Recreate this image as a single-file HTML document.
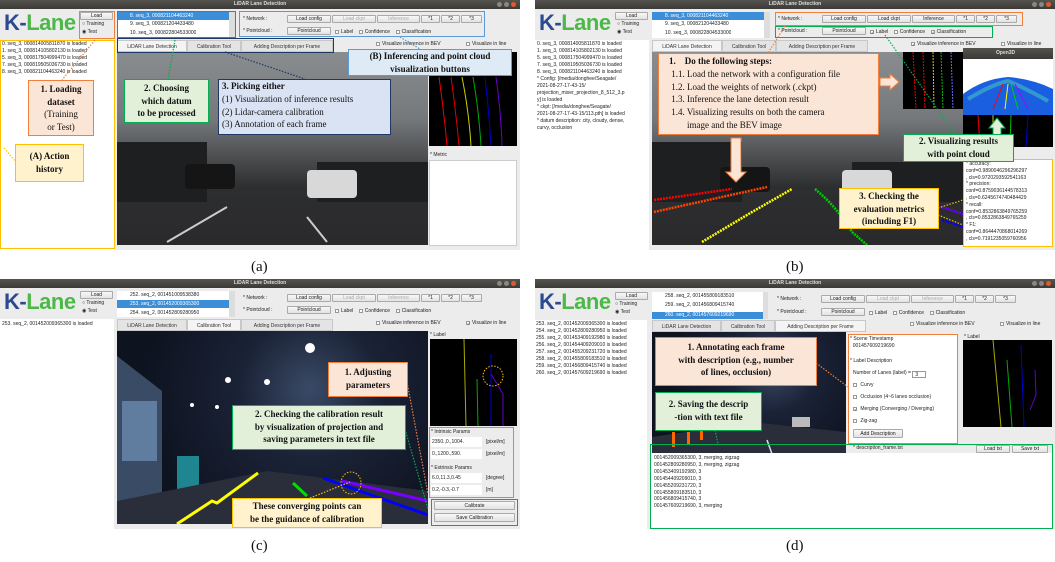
<!DOCTYPE html>
<html><head><meta charset="utf-8">
<style>
*{margin:0;padding:0;box-sizing:border-box}
body{width:1055px;height:562px;background:#fff;position:relative;overflow:hidden;font-family:"Liberation Sans",sans-serif}
.p{position:absolute;width:520px;height:250px;background:#ececec;overflow:hidden}
.a{position:absolute}
.tb{left:0;top:0;width:520px;height:9px;background:linear-gradient(#55534e,#3b3a36);color:#ddd;font-size:5px;font-weight:bold;text-align:center;line-height:9px}
.dot{width:5px;height:5px;border-radius:50%;background:#8a8883;top:2px}
.logo{left:4px;top:9px;font-size:22px;font-weight:bold;letter-spacing:-0.5px;line-height:28px}
.logo b{color:#2b4a8f}.logo i{font-style:normal;color:#4cb848}
.btn{background:linear-gradient(#f8f8f8,#e2e2e2);border:0.5px solid #aaa;border-radius:1px;font-size:5px;text-align:center;line-height:7px;height:8px;color:#222}
.dis{color:#aaa}
.t5{font-size:5px;color:#222;line-height:7px;white-space:nowrap}
.wb{background:#fff}
.cb{display:inline-block;width:4px;height:4px;border:0.5px solid #999;background:#fff;margin-right:2px;vertical-align:-0.5px;font-size:4px;line-height:4px}
.tab{top:40px;height:12px;font-size:5px;line-height:12px;text-align:center;background:#e4e4e4;border:0.5px solid #c8c8c8;color:#333}
.tab.on{background:#f4f4f4}
.ann{font-family:"Liberation Serif",serif;font-weight:bold;font-size:9px;text-align:center;line-height:12.5px;color:#111;border:1.5px solid}
.o{border-color:#f07f3c;background:#fbe5d6}
.y{border-color:#ffc000;background:#fff2cc}
.g{border-color:#00b050;background:#e2f0d9}
.nv{border-color:#1f3864;background:#dae3f3}
.bl{border-color:#5b9bd5;background:#deebf7}
.fr{border:1.5px solid;background:transparent}
.cap{font-family:"Liberation Serif",serif;font-size:15px;color:#111}
.sky{background:linear-gradient(#8a8d90 0%,#75787b 35%,#4b4d4f 55%,#2d2e30 70%,#2a2a2c 100%)}
.night{background:radial-gradient(circle at 62% 30%,#3a4a66 0%,#1a2236 30%,#0e1320 70%)}
</style></head><body>

<!-- ============ PANEL A ============ -->
<div class="p" style="left:0;top:0">
 <div class="a tb">LiDAR Lane Detection</div>
 <div class="a dot" style="left:497px"></div><div class="a dot" style="left:504px"></div><div class="a dot" style="left:511px;background:#e05a2b"></div>
 <div class="a logo"><b>K-</b><i>Lane</i></div>
 <div class="a btn" style="left:80px;top:12px;width:33px">Load</div>
 <div class="a t5" style="left:82px;top:21px">○ Training</div>
 <div class="a t5" style="left:82px;top:29px">◉ Test</div>
 <div class="a wb" style="left:0;top:40px;width:114px;height:210px"></div>
 <div class="a t5" style="left:2px;top:41px">0. seq_3, 000814005811870 is loaded<br>1. seq_3, 000814105802130 is loaded<br>5. seq_3, 000817504999470 is loaded<br>7. seq_3, 000819505036730 is loaded<br>8. seq_3, 000821104463240 is loaded</div>
 <div class="a wb" style="left:117px;top:12px;width:118px;height:26px"></div>
 <div class="a t5" style="left:117px;top:12px;width:112px;background:#3d8ed8;color:#fff;padding-left:13px;height:8px;line-height:8px">8. seq_3, 000821104463240</div>
 <div class="a t5" style="left:130px;top:21px">9. seq_3, 000821204433480</div>
 <div class="a t5" style="left:130px;top:30px;height:6px;overflow:hidden">10. seq_3, 000822804533000</div>
 <div class="a" style="left:229px;top:12px;width:6px;height:26px;background:#ddd"></div>
 <div class="a t5" style="left:243px;top:16px">* Network :</div>
 <div class="a btn" style="left:287px;top:15px;width:44px">Load config</div>
 <div class="a btn dis" style="left:332px;top:15px;width:44px">Load ckpt</div>
 <div class="a btn dis" style="left:377px;top:15px;width:43px">Inference</div>
 <div class="a btn" style="left:421px;top:15px;width:19px">*1</div>
 <div class="a btn" style="left:441px;top:15px;width:19px">*2</div>
 <div class="a btn" style="left:461px;top:15px;width:21px">*3</div>
 <div class="a t5" style="left:243px;top:28px">* Pointcloud :</div>
 <div class="a btn" style="left:287px;top:27px;width:44px">Pointcloud</div>
 <div class="a t5" style="left:335px;top:29px"><span class="cb"></span>Label &nbsp;&nbsp;&nbsp;<span class="cb"></span>Confidence &nbsp;&nbsp;&nbsp;<span class="cb"></span>Classification</div>
 <div class="a tab on" style="left:117px;width:70px">LiDAR Lane Detection</div>
 <div class="a tab" style="left:187px;width:54px">Calibration Tool</div>
 <div class="a tab" style="left:241px;width:92px">Adding Description per Frame</div>
 <div class="a t5" style="left:376px;top:41px"><span class="cb"></span>Visualize inference in BEV</div>
 <div class="a t5" style="left:466px;top:41px"><span class="cb"></span>Visualize in line</div>
 <div class="a sky" style="left:117px;top:52px;width:311px;height:193px"></div>
 <svg class="a" style="left:117px;top:52px" width="311" height="193"><g fill="#1d1f20"><rect x="0" y="90" width="90" height="60"/><rect x="200" y="110" width="111" height="40"/></g><rect x="68" y="112" width="50" height="25" fill="#151515" rx="4"/><rect x="190" y="118" width="50" height="28" fill="#d8d8d8" rx="4"/><g stroke="#ccc" stroke-width="2"><line x1="50" y1="190" x2="110" y2="155"/><line x1="210" y1="190" x2="190" y2="165"/></g></svg>
 <div class="a" style="left:429px;top:52px;width:88px;height:94px;background:#000"></div>
 <svg class="a" style="left:429px;top:52px" width="88" height="94"><g stroke-width="1" fill="none"><path d="M10 25 Q15 60 18 94" stroke="#e00"/><path d="M22 25 Q27 60 30 94" stroke="#d00"/><path d="M33 25 Q40 60 42 94" stroke="#cc0"/><path d="M44 25 Q50 60 52 94" stroke="#0a0"/><path d="M56 25 Q60 60 62 94" stroke="#00c"/><path d="M67 25 Q72 60 73 94" stroke="#60c"/></g></svg>
 <div class="a t5" style="left:430px;top:152px">* Metric</div>
 <div class="a wb" style="left:429px;top:160px;width:88px;height:86px;border:0.5px solid #ccc"></div>
 <!-- annotations -->
 <div class="a fr" style="left:79px;top:11px;width:36px;height:28px;border-color:#f07f3c"></div>
 <div class="a fr" style="left:0;top:40px;width:115px;height:209px;border-color:#ffc000"></div>
 <div class="a fr" style="left:117px;top:11px;width:119px;height:27px;border-color:#00b050"></div>
 <div class="a fr" style="left:117px;top:38px;width:217px;height:15px;border-color:#1f3864"></div>
 <div class="a fr" style="left:239px;top:11px;width:246px;height:26px;border-color:#5b9bd5"></div>
 <svg class="a" style="left:0;top:0" width="520" height="250"><g stroke-dasharray="1.5,1.5" stroke-width="1.2" fill="none"><line x1="95" y1="40" x2="62" y2="80" stroke="#f07f3c"/><line x1="4" y1="148" x2="16" y2="162" stroke="#ffc000"/><line x1="175" y1="40" x2="168" y2="79" stroke="#00b050"/><line x1="225" y1="52" x2="305" y2="79" stroke="#1f3864"/><line x1="400" y1="37" x2="420" y2="49" stroke="#5b9bd5"/></g></svg>
 <div class="a ann o" style="left:28px;top:80px;width:66px;height:56px;padding-top:2px">1. Loading<br>dataset<br><span style="font-weight:normal">(Training<br>or Test)</span></div>
 <div class="a ann y" style="left:15px;top:144px;width:69px;height:38px;padding-top:5px">(A) Action<br>history</div>
 <div class="a ann g" style="left:124px;top:79px;width:85px;height:44px;padding-top:2px">2. Choosing<br>which datum<br>to be processed</div>
 <div class="a ann nv" style="left:218px;top:79px;width:173px;height:56px;text-align:left;padding-left:3px;font-weight:normal;line-height:12.8px"><b>3. Picking either</b><br>(1) Visualization of inference results<br>(2) Lidar-camera calibration<br>(3) Annotation of each frame</div>
 <div class="a ann bl" style="left:348px;top:49px;width:164px;height:27px;padding-top:0px">(B) Inferencing and point cloud<br>visualization buttons</div>
</div>

<!-- ============ PANEL B ============ -->
<div class="p" style="left:535px;top:0">
 <div class="a tb">LiDAR Lane Detection</div>
 <div class="a dot" style="left:497px"></div><div class="a dot" style="left:504px"></div><div class="a dot" style="left:511px;background:#e05a2b"></div>
 <div class="a logo"><b>K-</b><i>Lane</i></div>
 <div class="a btn" style="left:80px;top:12px;width:33px">Load</div>
 <div class="a t5" style="left:82px;top:21px">○ Training</div>
 <div class="a t5" style="left:82px;top:29px">◉ Test</div>
 <div class="a wb" style="left:0;top:40px;width:114px;height:210px"></div>
 <div class="a t5" style="left:2px;top:41px">0. seq_3, 000814005811870 is loaded<br>1. seq_3, 000814105802130 is loaded<br>5. seq_3, 000817504999470 is loaded<br>7. seq_3, 000819505036730 is loaded<br>8. seq_3, 000821104463240 is loaded<br>* Config: [/media/donghee/Seagate/<br>2021-08-27-17-43-15/<br>projection_mixer_projection_8_512_3.p<br>y] is loaded<br>* ckpt: [/media/donghee/Seagate/<br>2021-08-27-17-43-15/113.pth] is loaded<br>* datum description: city, cloudy, dense,<br>curvy, occlusion</div>
 <div class="a wb" style="left:117px;top:12px;width:118px;height:26px"></div>
 <div class="a t5" style="left:117px;top:12px;width:112px;background:#3d8ed8;color:#fff;padding-left:13px;height:8px;line-height:8px">8. seq_3, 000821104463240</div>
 <div class="a t5" style="left:130px;top:21px">9. seq_3, 000821204433480</div>
 <div class="a t5" style="left:130px;top:30px;height:6px;overflow:hidden">10. seq_3, 000822804533000</div>
 <div class="a" style="left:229px;top:12px;width:6px;height:26px;background:#ddd"></div>
 <div class="a t5" style="left:243px;top:16px">* Network :</div>
 <div class="a btn" style="left:287px;top:15px;width:44px">Load config</div>
 <div class="a btn" style="left:332px;top:15px;width:44px">Load ckpt</div>
 <div class="a btn" style="left:377px;top:15px;width:43px">Inference</div>
 <div class="a btn" style="left:421px;top:15px;width:19px">*1</div>
 <div class="a btn" style="left:441px;top:15px;width:19px">*2</div>
 <div class="a btn" style="left:461px;top:15px;width:21px">*3</div>
 <div class="a t5" style="left:243px;top:28px">* Pointcloud :</div>
 <div class="a btn" style="left:287px;top:27px;width:44px">Pointcloud</div>
 <div class="a t5" style="left:335px;top:29px"><span class="cb">✓</span>Label &nbsp;&nbsp;&nbsp;<span class="cb"></span>Confidence &nbsp;&nbsp;&nbsp;<span class="cb">✓</span>Classification</div>
 <div class="a tab on" style="left:117px;width:70px">LiDAR Lane Detection</div>
 <div class="a tab" style="left:187px;width:54px">Calibration Tool</div>
 <div class="a tab" style="left:241px;width:92px">Adding Description per Frame</div>
 <div class="a t5" style="left:376px;top:41px"><span class="cb">✓</span>Visualize inference in BEV</div>
 <div class="a t5" style="left:466px;top:41px"><span class="cb"></span>Visualize in line</div>
 <div class="a sky" style="left:117px;top:52px;width:311px;height:193px"></div>
 <svg class="a" style="left:117px;top:52px" width="311" height="193"><g fill="#1d1f20"><rect x="0" y="90" width="90" height="60"/><rect x="200" y="110" width="111" height="40"/></g><rect x="68" y="115" width="50" height="25" fill="#151515" rx="4"/><rect x="190" y="118" width="50" height="28" fill="#d8d8d8" rx="4"/>
 <g stroke-dasharray="2,1" stroke-width="2.5" fill="none"><path d="M2 148 L80 137" stroke="#f00"/><path d="M2 160 L115 135" stroke="#f40"/><path d="M50 190 L100 160 L140 137" stroke="#ff0"/><path d="M163 137 Q185 155 200 180 L215 193" stroke="#0c0"/><path d="M290 155 L311 162" stroke="#60f"/><path d="M290 168 L311 175" stroke="#00f"/></g></svg>
 <div class="a" style="left:368px;top:52px;width:60px;height:57px;background:#000"></div>
 <svg class="a" style="left:368px;top:52px" width="60" height="57"><g stroke-width="1" stroke-dasharray="2,1"><line x1="10" y1="0" x2="13" y2="57" stroke="#e00"/><line x1="20" y1="0" x2="22" y2="57" stroke="#e00"/><line x1="30" y1="0" x2="31" y2="57" stroke="#cc0"/><line x1="38" y1="0" x2="40" y2="57" stroke="#0b0"/><line x1="48" y1="0" x2="50" y2="57" stroke="#66f"/></g></svg>
 <div class="a" style="left:428px;top:48px;width:90px;height:99px;background:#000"></div>
 <div class="a" style="left:428px;top:48px;width:90px;height:11px;background:linear-gradient(#55534e,#3b3a36);color:#ddd;font-size:5px;font-weight:bold;line-height:11px;padding-left:33px">Open3D</div>
 <div class="a" style="left:428px;top:59px;width:90px;height:56px;background:#fff"></div>
 <svg class="a" style="left:428px;top:59px" width="90" height="56"><path d="M0 35 Q20 20 45 18 Q70 20 90 30 L90 56 L0 56Z" fill="#1a5fe0"/><path d="M5 40 Q30 25 45 22 Q60 28 85 42" stroke="#39c" stroke-width="4" fill="none"/><g stroke-width="1"><line x1="40" y1="25" x2="30" y2="50" stroke="#f00"/><line x1="45" y1="25" x2="42" y2="50" stroke="#ff0"/><line x1="48" y1="25" x2="55" y2="50" stroke="#0c0"/><line x1="52" y1="25" x2="65" y2="50" stroke="#a0f"/></g></svg>
 <svg class="a" style="left:428px;top:115px" width="90" height="32"><g stroke-width="1"><line x1="15" y1="0" x2="17" y2="32" stroke="#e00"/><line x1="30" y1="0" x2="30" y2="32" stroke="#cc0"/><line x1="48" y1="0" x2="47" y2="32" stroke="#0b0"/><line x1="65" y1="0" x2="63" y2="32" stroke="#00c"/></g></svg>
 <div class="a wb" style="left:429px;top:160px;width:88px;height:86px"></div>
 <div class="a t5" style="left:431px;top:161px;line-height:6.8px">* accuracy:<br>conf=0.9890046296296297<br>, cls=0.9720293592541163<br>* precision:<br>conf=0.8759036144578313<br>, cls=0.6245674740484429<br>* recall:<br>conf=0.8532863849765259<br>, cls=0.8532863849765259<br>* F1:<br>conf=0.8644470868014269<br>, cls=0.7191235059760956</div>
 <div class="a fr" style="left:428px;top:159px;width:90px;height:88px;border-color:#ffc000"></div>
 <div class="a fr" style="left:240px;top:12px;width:248px;height:14px;border-color:#f07f3c"></div>
 <div class="a fr" style="left:240px;top:26px;width:218px;height:12px;border-color:#00b050"></div>
 <svg class="a" style="left:0;top:0" width="520" height="250"><g stroke-dasharray="1.5,1.5" stroke-width="1.2" fill="none"><line x1="250" y1="26" x2="233" y2="53" stroke="#f07f3c"/><line x1="350" y1="35" x2="420" y2="134" stroke="#00b050"/><line x1="403" y1="208" x2="428" y2="200" stroke="#ffc000"/><line x1="403" y1="215" x2="428" y2="225" stroke="#ffc000"/></g>
 <path d="M345 78 L355 78 L355 74 L364 82 L355 90 L355 86 L345 86Z" fill="#fbe5d6" stroke="#f07f3c"/>
 <path d="M196 138 L206 138 L206 172 L211 172 L201 182 L191 172 L196 172Z" fill="#fbe5d6" stroke="#f07f3c"/>
 <path d="M458 137 L466 137 L466 128 L470 128 L462 118 L454 128 L458 128Z" fill="#e2f0d9" stroke="#00b050"/></svg>
 <div class="a ann o" style="left:123px;top:53px;width:221px;height:82px;text-align:left;font-weight:normal;padding-left:10px;line-height:12.8px;padding-top:1px"><b>1.&nbsp;&nbsp;&nbsp;&nbsp;Do the following steps:</b><br>&nbsp;1.1. Load the network with a configuration file<br>&nbsp;1.2. Load the weights of network (.ckpt)<br>&nbsp;1.3. Inference the lane detection result<br>&nbsp;1.4. Visualizing results on both the camera<br>&nbsp;&nbsp;&nbsp;&nbsp;&nbsp;&nbsp;&nbsp;&nbsp;image and the BEV image</div>
 <div class="a ann g" style="left:368px;top:134px;width:111px;height:28px;padding-top:0px">2. Visualizing results<br>with point cloud</div>
 <div class="a ann y" style="left:304px;top:188px;width:100px;height:41px;padding-top:1px">3. Checking the<br>evaluation metrics<br>(including F1)</div>
</div>

<!-- ============ PANEL C ============ -->
<div class="p" style="left:0;top:279px">
 <div class="a tb">LiDAR Lane Detection</div>
 <div class="a dot" style="left:497px"></div><div class="a dot" style="left:504px"></div><div class="a dot" style="left:511px;background:#e05a2b"></div>
 <div class="a logo"><b>K-</b><i>Lane</i></div>
 <div class="a btn" style="left:80px;top:12px;width:33px">Load</div>
 <div class="a t5" style="left:82px;top:21px">○ Training</div>
 <div class="a t5" style="left:82px;top:29px">◉ Test</div>
 <div class="a wb" style="left:0;top:40px;width:114px;height:210px"></div>
 <div class="a t5" style="left:2px;top:42px">253. seq_2, 001452009365300 is loaded</div>
 <div class="a wb" style="left:117px;top:12px;width:118px;height:26px"></div>
 <div class="a t5" style="left:130px;top:13px">252. seq_2, 001451009538380</div>
 <div class="a t5" style="left:117px;top:21px;width:112px;background:#3d8ed8;color:#fff;padding-left:13px;height:8px;line-height:8px">253. seq_2, 001452009365300</div>
 <div class="a t5" style="left:130px;top:31px;height:6px;overflow:hidden">254. seq_2, 001452809280950</div>
 <div class="a" style="left:229px;top:12px;width:6px;height:26px;background:#ddd"></div>
 <div class="a t5" style="left:243px;top:16px">* Network :</div>
 <div class="a btn" style="left:287px;top:15px;width:44px">Load config</div>
 <div class="a btn dis" style="left:332px;top:15px;width:44px">Load ckpt</div>
 <div class="a btn dis" style="left:377px;top:15px;width:43px">Inference</div>
 <div class="a btn" style="left:421px;top:15px;width:19px">*1</div>
 <div class="a btn" style="left:441px;top:15px;width:19px">*2</div>
 <div class="a btn" style="left:461px;top:15px;width:21px">*3</div>
 <div class="a t5" style="left:243px;top:28px">* Pointcloud :</div>
 <div class="a btn" style="left:287px;top:27px;width:44px">Pointcloud</div>
 <div class="a t5" style="left:335px;top:29px"><span class="cb"></span>Label &nbsp;&nbsp;&nbsp;<span class="cb"></span>Confidence &nbsp;&nbsp;&nbsp;<span class="cb"></span>Classification</div>
 <div class="a tab" style="left:117px;width:70px">LiDAR Lane Detection</div>
 <div class="a tab on" style="left:187px;width:54px">Calibration Tool</div>
 <div class="a tab" style="left:241px;width:92px">Adding Description per Frame</div>
 <div class="a t5" style="left:376px;top:41px"><span class="cb"></span>Visualize inference in BEV</div>
 <div class="a t5" style="left:466px;top:41px"><span class="cb">✓</span>Visualize in line</div>
 <div class="a night" style="left:117px;top:52px;width:311px;height:193px"></div>
 <svg class="a" style="left:117px;top:52px" width="311" height="193"><path d="M0 25 L45 60 L45 180 L0 193Z" fill="#3a4b66"/><rect x="5" y="70" width="35" height="60" fill="#7a9cc4" opacity="0.6"/><rect x="60" y="125" width="22" height="40" fill="#2ad0d8" opacity="0.6"/><g fill="#fff"><circle cx="193" cy="17" r="5"/><circle cx="111" cy="49" r="3"/><circle cx="150" cy="51" r="3"/><circle cx="75" cy="74" r="2"/><circle cx="100" cy="76" r="2"/></g><path d="M0 193 L311 193 L311 160 L150 140 L0 170Z" fill="#2a2e3a"/>
 <g stroke-width="3" fill="none"><path d="M60 193 L95 170 L100 172 L141 142" stroke="#ff0"/><path d="M176 152 L190 165" stroke="#0d0"/><path d="M206 147 L311 184" stroke="#00f"/><path d="M225 150 L311 170" stroke="#70f"/></g>
 <ellipse cx="234" cy="152" rx="10" ry="11" fill="none" stroke="#ffc000" stroke-dasharray="1.5,1.5"/></svg>
 <div class="a t5" style="left:430px;top:53px">* Label</div>
 <div class="a" style="left:430px;top:60px;width:87px;height:87px;background:#000"></div>
 <svg class="a" style="left:430px;top:60px" width="87" height="87"><g stroke-width="1" fill="none"><path d="M34 0 L36 87" stroke="#aa0"/><path d="M47 40 L48 87" stroke="#0a0"/><path d="M61 15 L61 87" stroke="#00c"/><path d="M61 35 L73 55 L73 87" stroke="#60c"/></g><circle cx="63" cy="37" r="10" fill="none" stroke="#ffc000" stroke-dasharray="1.5,1.5"/></svg>
 <div class="a t5" style="left:431px;top:150px;line-height:7px">* Intrinsic Params</div>
 <div class="a wb t5" style="left:431px;top:158px;width:51px;height:10px;line-height:10px;padding-left:1px">2350.,0.,1004.</div><div class="a t5" style="left:486px;top:160px">[pixel/m]</div>
 <div class="a wb t5" style="left:431px;top:170px;width:51px;height:10px;line-height:10px;padding-left:1px">0.,1200.,590.</div><div class="a t5" style="left:486px;top:172px">[pixel/m]</div>
 <div class="a t5" style="left:431px;top:186px">* Extrinsic Params</div>
 <div class="a wb t5" style="left:431px;top:194px;width:51px;height:10px;line-height:10px;padding-left:1px">6.0,11.3,0.45</div><div class="a t5" style="left:486px;top:196px">[degree]</div>
 <div class="a wb t5" style="left:431px;top:206px;width:51px;height:10px;line-height:10px;padding-left:1px">0.2,-0.3,-0.7</div><div class="a t5" style="left:486px;top:208px">[m]</div>
 <div class="a fr" style="left:429px;top:148px;width:85px;height:71px;border-color:#f07f3c"></div>
 <div class="a btn" style="left:434px;top:222px;width:81px;height:9px;line-height:9px">Calibrate</div>
 <div class="a btn" style="left:434px;top:234px;width:81px;height:9px;line-height:9px">Save Calibration</div>
 <div class="a fr" style="left:431px;top:220px;width:87px;height:27px;border-color:#00b050"></div>
 <svg class="a" style="left:0;top:0" width="520" height="250"><g stroke-dasharray="1.5,1.5" stroke-width="1.2" fill="none"><line x1="407" y1="103" x2="428" y2="215" stroke="#f07f3c"/><line x1="405" y1="150" x2="428" y2="230" stroke="#00b050"/><line x1="310" y1="219" x2="350" y2="203" stroke="#ffc000"/></g></svg>
 <div class="a ann o" style="left:328px;top:83px;width:80px;height:35px;padding-top:3px">1. Adjusting<br>parameters</div>
 <div class="a ann g" style="left:232px;top:126px;width:174px;height:45px;padding-top:2px">2. Checking the calibration result<br>by visualization of projection and<br>saving parameters in text file</div>
 <div class="a ann y" style="left:232px;top:219px;width:150px;height:30px;padding-top:1px">These converging points can<br>be the guidance of calibration</div>
</div>

<!-- ============ PANEL D ============ -->
<div class="p" style="left:535px;top:279px">
 <div class="a tb">LiDAR Lane Detection</div>
 <div class="a dot" style="left:497px"></div><div class="a dot" style="left:504px"></div><div class="a dot" style="left:511px;background:#e05a2b"></div>
 <div class="a logo"><b>K-</b><i>Lane</i></div>
 <div class="a btn" style="left:80px;top:13px;width:33px">Load</div>
 <div class="a t5" style="left:80px;top:22px">○ Training</div>
 <div class="a t5" style="left:80px;top:30px">◉ Test</div>
 <div class="a wb" style="left:0;top:41px;width:112px;height:209px"></div>
 <div class="a t5" style="left:1px;top:42px">253. seq_2, 001452009365300 is loaded<br>254. seq_2, 001452809280950 is loaded<br>255. seq_2, 001453409192980 is loaded<br>256. seq_2, 001454409209010 is loaded<br>257. seq_2, 001455209231720 is loaded<br>258. seq_2, 001455809183510 is loaded<br>259. seq_2, 001456809415740 is loaded<br>260. seq_2, 001457609219690 is loaded</div>
 <div class="a wb" style="left:117px;top:13px;width:116px;height:27px"></div>
 <div class="a t5" style="left:130px;top:14px">258. seq_2, 001455809183510</div>
 <div class="a t5" style="left:130px;top:23px">259. seq_2, 001456809415740</div>
 <div class="a t5" style="left:117px;top:33px;width:111px;background:#3d8ed8;color:#fff;padding-left:13px;height:7px;overflow:hidden">260. seq_2, 001457609219690</div>
 <div class="a" style="left:228px;top:13px;width:5px;height:27px;background:#ddd"></div>
 <div class="a t5" style="left:242px;top:17px">* Network :</div>
 <div class="a btn" style="left:286px;top:16px;width:44px">Load config</div>
 <div class="a btn dis" style="left:331px;top:16px;width:44px">Load ckpt</div>
 <div class="a btn dis" style="left:376px;top:16px;width:43px">Inference</div>
 <div class="a btn" style="left:420px;top:16px;width:19px">*1</div>
 <div class="a btn" style="left:440px;top:16px;width:19px">*2</div>
 <div class="a btn" style="left:460px;top:16px;width:21px">*3</div>
 <div class="a t5" style="left:242px;top:30px">* Pointcloud :</div>
 <div class="a btn" style="left:286px;top:29px;width:44px">Pointcloud</div>
 <div class="a t5" style="left:334px;top:31px"><span class="cb"></span>Label &nbsp;&nbsp;&nbsp;<span class="cb"></span>Confidence &nbsp;&nbsp;&nbsp;<span class="cb"></span>Classification</div>
 <div class="a tab" style="left:117px;width:69px;top:41px">LiDAR Lane Detection</div>
 <div class="a tab" style="left:186px;width:54px;top:41px">Calibration Tool</div>
 <div class="a tab on" style="left:240px;width:91px;top:41px">Adding Description per Frame</div>
 <div class="a t5" style="left:375px;top:42px"><span class="cb"></span>Visualize inference in BEV</div>
 <div class="a t5" style="left:465px;top:42px"><span class="cb"></span>Visualize in line</div>
 <div class="a night" style="left:117px;top:53px;width:194px;height:122px"></div>
 <svg class="a" style="left:117px;top:53px" width="194" height="122"><path d="M0 122 L194 122 L194 100 L100 90 L0 105Z" fill="#2a2e3a"/><rect x="140" y="85" width="18" height="10" fill="#bbb"/><g fill="#f60"><rect x="20" y="100" width="3" height="15"/><rect x="35" y="100" width="3" height="12"/><rect x="48" y="98" width="3" height="10"/></g><g stroke="#ddd" stroke-width="1.5"><line x1="120" y1="122" x2="115" y2="108"/></g></svg>
 <div class="a wb" style="left:313px;top:55px;width:109px;height:110px"></div>
 <div class="a t5" style="left:315px;top:57px;line-height:7px">* Scene Timestamp<br>&nbsp;&nbsp;001457609219690</div>
 <div class="a t5" style="left:315px;top:79px">* Label Description</div>
 <div class="a t5" style="left:318px;top:91px">Number of Lanes (label) = <span style="display:inline-block;border:0.5px solid #999;width:14px;height:7px;vertical-align:-2px;padding-left:2px;line-height:6px">3</span></div>
 <div class="a t5" style="left:318px;top:103px"><span class="cb"></span> Curvy</div>
 <div class="a t5" style="left:318px;top:115px"><span class="cb"></span> Occlusion (4~6 lanes occlusion)</div>
 <div class="a t5" style="left:318px;top:127px"><span class="cb">✓</span> Merging (Converging / Diverging)</div>
 <div class="a t5" style="left:318px;top:139px"><span class="cb"></span> Zig-zag</div>
 <div class="a btn" style="left:318px;top:150px;width:50px;height:9px;line-height:9px">Add Description</div>
 <div class="a fr" style="left:313px;top:55px;width:110px;height:110px;border-color:#f07f3c"></div>
 <div class="a t5" style="left:429px;top:55px">* Label</div>
 <div class="a" style="left:428px;top:61px;width:89px;height:87px;background:#000"></div>
 <svg class="a" style="left:428px;top:61px" width="89" height="87"><g stroke-width="1" fill="none"><path d="M30 0 L38 87" stroke="#aa0"/><path d="M44 20 L49 87" stroke="#0a0"/><path d="M58 5 L61 87" stroke="#00c"/><path d="M72 30 L73 55 L67 70" stroke="#60c"/></g></svg>
 <div class="a t5" style="left:318px;top:166px">* description_frame.txt</div>
 <div class="a btn" style="left:441px;top:166px;width:34px;height:8px">Load txt</div>
 <div class="a btn" style="left:477px;top:166px;width:36px;height:8px">Save txt</div>
 <div class="a wb" style="left:115px;top:174px;width:402px;height:76px"></div>
 <div class="a t5" style="left:119px;top:176px;line-height:6.9px">001452009365300, 3, merging, zigzag<br>001452809280950, 3, merging, zigzag<br>001453409192980, 3<br>001454409209010, 3<br>001455209231720, 3<br>001455809183510, 3<br>001456809415740, 3<br>001457609219690, 3, merging</div>
 <div class="a fr" style="left:115px;top:165px;width:403px;height:85px;border-color:#00b050"></div>
 <svg class="a" style="left:0;top:0" width="520" height="250"><g stroke-dasharray="1.5,1.5" stroke-width="1.2" fill="none"><line x1="281" y1="84" x2="313" y2="108" stroke="#f07f3c"/><line x1="180" y1="151" x2="183" y2="165" stroke="#00b050"/></g></svg>
 <div class="a ann o" style="left:120px;top:58px;width:162px;height:49px;padding-top:3px">1. Annotating each frame<br>with description (e.g., number<br>of lines, occlusion)</div>
 <div class="a ann g" style="left:120px;top:113px;width:107px;height:39px;padding-top:5px">2. Saving the descrip<br>-tion with text file</div>
</div>

<div class="a cap" style="position:absolute;left:251px;top:259px">(a)</div>
<div class="a cap" style="position:absolute;left:786px;top:259px">(b)</div>
<div class="a cap" style="position:absolute;left:251px;top:538px">(c)</div>
<div class="a cap" style="position:absolute;left:786px;top:538px">(d)</div>
</body></html>
